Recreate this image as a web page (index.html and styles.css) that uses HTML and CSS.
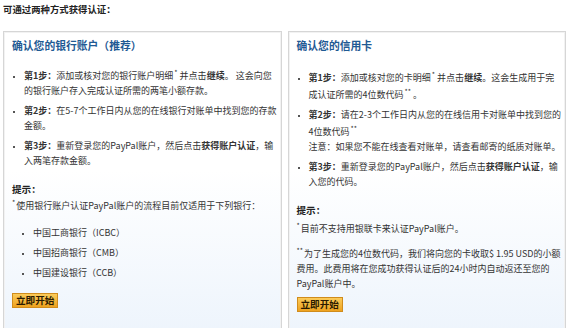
FILE: index.html
```html
<!DOCTYPE html>
<html lang="zh-CN">
<head>
    <meta charset="UTF-8">
    <title>获得认证</title>
    <link rel="stylesheet" href="styles.css">
</head>
<body>
    <h2 class="intro">可通过两种方式获得认证：</h2>

    <div class="options">
        <!-- 银行账户 -->
        <div class="box">
            <h3>确认您的银行账户（推荐）</h3>
            <ul class="steps">
                <li><b>第1步：</b>添加或核对您的银行账户明细<sup>*</sup>并点击<b>继续</b>。 这会向您的银行账户存入完成认证所需的两笔小额存款。</li>
                <li><b>第2步：</b>在5-7个工作日内从您的在线银行对账单中找到您的存款金额。</li>
                <li><b>第3步：</b>重新登录您的PayPal账户，然后点击<b>获得账户认证</b>，输入两笔存款金额。</li>
            </ul>
            <h4>提示：</h4>
            <p><sup>*</sup>使用银行账户认证PayPal账户的流程目前仅适用于下列银行：</p>
            <ul class="banks">
                <li>中国工商银行（ICBC）</li>
                <li>中国招商银行（CMB）</li>
                <li>中国建设银行（CCB）</li>
            </ul>
            <button class="start">立即开始</button>
        </div>

        <!-- 信用卡 -->
        <div class="box card">
            <h3>确认您的信用卡</h3>
            <ul class="steps">
                <li><b>第1步：</b>添加或核对您的卡明细<sup>*</sup>并点击<b>继续</b>。这会生成用于完成认证所需的4位数代码<sup>**</sup>。</li>
                <li><b>第2步：</b>请在2-3个工作日内从您的在线信用卡对账单中找到您的4位数代码<sup>**</sup><br>注意：如果您不能在线查看对账单，请查看邮寄的纸质对账单。</li>
                <li><b>第3步：</b>重新登录您的PayPal账户，然后点击<b>获得账户认证</b>，输入您的代码。</li>
            </ul>
            <h4>提示：</h4>
            <p><sup>*</sup>目前不支持用银联卡来认证PayPal账户。</p>
            <p class="note"><sup>**</sup>为了生成您的4位数代码，我们将向您的卡收取$ 1.95 USD的小额费用。此费用将在您成功获得认证后的24小时内自动返还至您的PayPal账户中。</p>
            <button class="start">立即开始</button>
        </div>
    </div>
</body>
</html>
```

FILE: styles.css
```css
body {
    margin: 0;
    padding: 3px;
    font-family: "Noto Sans CJK SC", "DejaVu Sans", sans-serif;
    font-size: 9px;
    line-height: 15px;
    color: #333;
    background-color: white;
}

.intro {
    margin: 0;
    font-size: 9.4px;
    line-height: 12px;
    font-weight: bold;
    color: #222;
}

.options {
    display: flex;
    gap: 6px;
    margin-top: 16px;
}

.box {
    flex: 1;
    min-height: 300px;
    padding: 6px 3px 0 8px;
    border: 1px solid #d6d6d6;
    box-shadow: inset 0 0 0 1px #f2f2f2;
    background: linear-gradient(to bottom, #ffffff 45%, #edf4fc 100%);
}

.box h3 {
    margin: 0 0 16px;
    font-size: 10.8px;
    line-height: 14px;
    color: #1f5a94;
}

.steps {
    margin: 0;
    padding-left: 12px;
    list-style: square;
}

.steps li {
    margin-bottom: 5px;
}

li::marker {
    font-size: 6px;
    color: #555;
}

.box h4 {
    margin: 14px 0 1px;
    font-size: 9.6px;
    line-height: 15px;
    color: #222;
}

.box p {
    margin: 0;
}

.box .note {
    margin-top: 8px;
}

sup {
    font-size: 7px;
    line-height: 0;
    margin: 0 2px 0 1px;
}

.box p sup {
    margin: 0 1px 0 0;
}

.card sup {
    line-height: 12px;
}

.banks {
    margin: 10px 0 10px;
    padding-left: 21px;
    list-style: square;
    line-height: 20px;
}

.start {
    display: block;
    height: 15px;
    padding: 0 3px;
    margin-top: 6px;
    font-family: inherit;
    font-size: 9.6px;
    font-weight: bold;
    line-height: 13px;
    color: #2a1a00;
    border: 1px solid #d08c1c;
    border-radius: 0;
    background: linear-gradient(to bottom, #fbcb5a, #eea21f);
    cursor: pointer;
}

.banks + .start {
    margin-top: 0;
}
```
